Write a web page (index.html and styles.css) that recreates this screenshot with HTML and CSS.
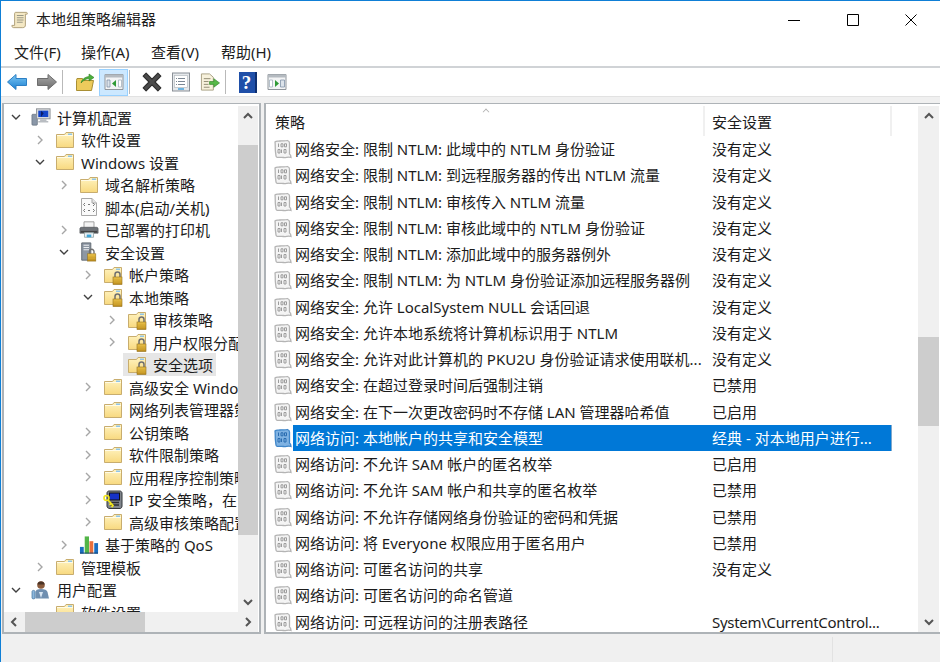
FILE: index.html
```html
<!DOCTYPE html>
<html lang="zh-CN">
<head>
    <meta charset="utf-8">
    <title>本地组策略编辑器</title>
    <link rel="stylesheet" href="styles.css">
</head>
<body>
<svg class="sprite" xmlns="http://www.w3.org/2000/svg">
    <defs>
        <linearGradient id="folder-fill" x1="0" y1="0" x2="0" y2="1"><stop offset="0" stop-color="#fff3c0"/><stop offset="1" stop-color="#f8d97f"/></linearGradient>
        <linearGradient id="gold" x1="0" y1="0" x2="0" y2="1"><stop offset="0" stop-color="#ecc44c"/><stop offset="1" stop-color="#b98a1c"/></linearGradient>
        <linearGradient id="back-fill" x1="0" y1="0" x2="0" y2="1"><stop offset="0" stop-color="#7cc8f5"/><stop offset="1" stop-color="#1b7fd0"/></linearGradient>
        <linearGradient id="gray-fill" x1="0" y1="0" x2="0" y2="1"><stop offset="0" stop-color="#a8a8a8"/><stop offset="1" stop-color="#6c6c6c"/></linearGradient>
        <symbol id="chev-right" viewBox="0 0 12 12"><path d="M4 2l4 4-4 4" fill="none" stroke="#a6a6a6" stroke-width="1.4"/></symbol>
        <symbol id="chev-down" viewBox="0 0 12 12"><path d="M2 4l4 4 4-4" fill="none" stroke="#404040" stroke-width="1.4"/></symbol>
        <symbol id="bar-up" viewBox="0 0 12 12"><path d="M2 8l4-4 4 4" fill="none" stroke="#555" stroke-width="2"/></symbol>
        <symbol id="bar-down" viewBox="0 0 12 12"><path d="M2 4l4 4 4-4" fill="none" stroke="#555" stroke-width="2"/></symbol>
        <symbol id="bar-left" viewBox="0 0 12 12"><path d="M8 2L4 6l4 4" fill="none" stroke="#555" stroke-width="2"/></symbol>
        <symbol id="bar-right" viewBox="0 0 12 12"><path d="M4 2l4 4-4 4" fill="none" stroke="#555" stroke-width="2"/></symbol>
        <symbol id="folder" viewBox="0 0 20 20">
            <path d="M1.500 4.500V17.500H18.500V2.500H11L9.500 4.500Z" fill="url(#folder-fill)" stroke="#c8ad6e"/>
            <path d="M2 5.500H18" stroke="#fffbe6"/>
            <path d="M13 3.500h4v1.500h-4z" fill="#8fc4e8"/>
        </symbol>
        <symbol id="folder-lock" viewBox="0 0 20 20">
            <path d="M1.500 4.500V17.500H18.500V2.500H11L9.500 4.500Z" fill="url(#folder-fill)" stroke="#c8ad6e"/>
            <path d="M13 3.500h4v1.500h-4z" fill="#8fc4e8"/>
            <path d="M12 12V9.500a2.500 2.500 0 0 1 5 0V12" fill="none" stroke="#6f6f6f" stroke-width="1.500"/>
            <rect x="10" y="12" width="9" height="7.500" fill="url(#gold)" stroke="#94701a" stroke-width=".6"/>
            <path d="M10.500 15h8M10.500 17h8" stroke="#d9ae35" stroke-width=".7"/>
        </symbol>
        <symbol id="policy" viewBox="0 0 18 20">
            <path d="M1 3C2.500 1.500 4 2.500 6 2C8 1.500 10 2.500 13.500 1.500C15 2 15.500 3 15.500 4V15C16.500 15.500 17 16.500 17 18.500C14 17.500 12 19 9.500 18.500C7 18 4 19 2.500 18C1.500 17 2 15 1.500 13C1 10 1.500 6 1 3Z" fill="var(--paper, #f4f4f4)" stroke="var(--edge, #b4b4b4)" stroke-width="1.300"/>
            <g fill="none" stroke="var(--mark, #9c9c9c)" stroke-width="1">
                <path d="M4.500 4.500v3.500M7 4.800h2v3h-2zM10.500 4.800h2v3h-2z"/>
                <path d="M4 10.500h2v3.500h-2zM7.500 10.500v3.500M10 10.500h2v3.500h-2z"/>
            </g>
        </symbol>
        <symbol id="scroll" viewBox="0 0 20 20">
            <path d="M5 1.500H17C18 1.500 18.500 2.500 18 3.500H16V15.500C16 17.500 15 18.500 13 18.500H3C1.500 18.500 1 17.500 1 16H4V3C4 2 4.500 1.500 5 1.500Z" fill="#f4e8c4" stroke="#a99972"/>
            <path d="M6.500 5H14M6.500 7.500H14M6.500 10H14M6.500 12.500H13" stroke="#8f8f80"/>
        </symbol>
        <symbol id="computer" viewBox="0 0 22 20">
            <rect x="1" y="7" width="6" height="12" rx="1" fill="#8a97a8" stroke="#5f6a78" stroke-width=".7"/>
            <rect x="6" y="1" width="15" height="11" fill="#d5d8dc" stroke="#8b8f95"/>
            <rect x="8" y="3" width="11" height="7" fill="#1444c8"/>
            <path d="M11 3l3 3-3 4z" fill="#0b1e66"/>
            <path d="M10 12.500h7v2h-7zM8 14.500h11v1.500H8z" fill="#b9bdc2"/>
        </symbol>
        <symbol id="script" viewBox="0 0 18 20">
            <path d="M1.500 1.500H12L16.500 6V18.500H1.500Z" fill="#fafafa" stroke="#a8a8a8"/>
            <path d="M12 1.500V6H16.500" fill="#e5e5e5" stroke="#a8a8a8"/>
            <path d="M5 6L3.500 7.500 5 9M8 7.500h2M13 6l1.500 1.500L13 9M5 12L3.500 13.500 5 15M8 13.500h2M13 12l1.500 1.500L13 15" fill="none" stroke="#777"/>
        </symbol>
        <symbol id="printer" viewBox="0 0 22 20">
            <path d="M5.500 1h11v7h-11z" fill="#f4f4f4" stroke="#999"/>
            <path d="M1 8.500C1 7.500 2 7 3 7H19C20 7 21 7.500 21 8.500V13.500H1Z" fill="#6f7378" stroke="#4e5156" stroke-width=".7"/>
            <path d="M2 11h18v2H2z" fill="#444"/>
            <path d="M6 13h10v5H6z" fill="#eef3f7" stroke="#9aa"/>
            <path d="M8.500 15h5v3h-5z" fill="#3fa6d8"/>
        </symbol>
        <symbol id="server-lock" viewBox="0 0 20 22">
            <path d="M2 1h10v19H2z" fill="#8d97a3" stroke="#5e6670"/>
            <path d="M4 3.500h6M4 6h6M4 8.500h6" stroke="#e9ecef" stroke-width="1.200"/>
            <path d="M10.500 13V10.500a2.500 2.500 0 0 1 5 0V13" fill="none" stroke="#6f6f6f" stroke-width="1.500"/>
            <rect x="8.500" y="13" width="9" height="8" fill="url(#gold)" stroke="#94701a" stroke-width=".6"/>
            <path d="M9 16h8M9 18h8" stroke="#d9ae35" stroke-width=".7"/>
        </symbol>
        <symbol id="ip-sec" viewBox="0 0 20 20">
            <path d="M4 3C4 1.800 5 1 6 1H17C18 1 19 2 19 3V16C19 17.500 18 18.500 17 18.500H7C5 18.500 4 17.500 4 16Z" fill="#80858c" stroke="#33363a"/>
            <rect x="6.500" y="3" width="10" height="7" fill="#1632c8" stroke="#111"/>
            <path d="M7 12.500h9M7 15h9" stroke="#2c2e32" stroke-width="1.300"/>
            <circle cx="3.500" cy="8" r="2.500" fill="none" stroke="#f2e61e" stroke-width="1.600"/>
            <path d="M5 10l5.500 6M8 13.500l-1.500 1.500M10 15.500L8.500 17" fill="none" stroke="#f2e61e" stroke-width="1.800"/>
        </symbol>
        <symbol id="qos" viewBox="0 0 21 20">
            <path d="M1 12h4v7H1z" fill="#1a6fc0"/>
            <path d="M6 1h4.500v18H6z" fill="#53b548"/>
            <path d="M11 6h4v13h-4z" fill="#e8703c"/>
            <path d="M16 8h4v11h-4z" fill="#1a6fc0"/>
            <path d="M1 18h19v1H1z" fill="#0e3e70"/>
        </symbol>
        <symbol id="user" viewBox="0 0 20 20">
            <circle cx="10" cy="5" r="3.800" fill="#8a5b3c"/>
            <path d="M10 1.500c2 0 3.500 1.200 3.500 3H6.500c0-1.800 1.500-3 3.500-3z" fill="#4a3326"/>
            <path d="M4.500 18.500V12c0-2 2-3 5.500-3s6 1 6.500 3l1.500 6.500z" fill="#6f8fb0"/>
            <path d="M1 11.500c0-1.500 3-1.500 3 0V18c0 1.200-3 1.200-3 0z" fill="#8db7dc" stroke="#40709c" stroke-width=".7"/>
            <path d="M8 12l2 6 2-6z" fill="#d8e6f2"/>
        </symbol>
        <symbol id="go-back" viewBox="0 0 20 18"><path d="M.5 9L9 1.500V5.500H19.500V12.500H9V16.500Z" fill="url(#back-fill)" stroke="#2c7fc4" stroke-linejoin="round"/></symbol>
        <symbol id="go-forward" viewBox="0 0 20 18"><path d="M19.500 9L11 1.500V5.500H.5V12.500H11V16.500Z" fill="url(#gray-fill)" stroke="#6d6d6d" stroke-linejoin="round"/></symbol>
        <symbol id="go-up" viewBox="0 0 20 20">
            <path d="M1.500 8.500V18.500H16.500L18.500 8.500H9L7.500 6.500H2Z" fill="#eccb5c" stroke="#a98f34"/>
            <path d="M6 11C7 7 10 5 14 4.500V2L19 5.500 14 9V6.500C11 7 8 8.500 6 11Z" fill="#4caf3c" stroke="#2f7f22" stroke-width=".6"/>
        </symbol>
        <symbol id="pane-left" viewBox="0 0 20 20">
            <path d="M1 2.500h18v15H1z" fill="#f3f4f5" stroke="#8f959b"/>
            <path d="M1 2.500h18v3H1z" fill="#b4bac0"/>
            <path d="M3 8h3v7H3z" fill="#dce3ea" stroke="#8093a8" stroke-width=".8"/>
            <path d="M14.500 8h3v7h-3z" fill="#fff" stroke="#a5b2bf" stroke-width=".8"/>
            <path d="M8 11.500l4-3.500v7z" fill="#2f9a35"/>
        </symbol>
        <symbol id="pane-right" viewBox="0 0 20 20">
            <path d="M1 2.500h18v15H1z" fill="#f3f4f5" stroke="#8f959b"/>
            <path d="M1 2.500h18v3H1z" fill="#b4bac0"/>
            <path d="M2.500 8h3v7h-3z" fill="#fff" stroke="#a5b2bf" stroke-width=".8"/>
            <path d="M13.500 8h4v7h-4z" fill="#dce3ea" stroke="#8093a8" stroke-width=".8"/>
            <path d="M12 11.500L8 8v7z" fill="#2f9a35"/>
        </symbol>
        <symbol id="delete" viewBox="1.500 1.500 17 17"><path d="M2.500 5L5 2.500 10 7.500 15 2.500 17.500 5 12.500 10 17.500 15 15 17.500 10 12.500 5 17.500 2.500 15 7.500 10Z" fill="#4b4b4b" stroke="#2e2e2e" stroke-linejoin="round"/></symbol>
        <symbol id="props" viewBox="0 0 20 20">
            <rect x="1.500" y="1" width="17" height="18" fill="#e5e8eb" stroke="#8a9097"/>
            <rect x="3.500" y="3.500" width="13" height="12" fill="#fff" stroke="#b5bbc1" stroke-width=".7"/>
            <path d="M7 6.500h7M7 9.500h7M7 12.500h7M5 6.500h1M5 9.500h1M5 12.500h1" stroke="#7b8794"/>
            <path d="M7 17h6" stroke="#46a5de" stroke-width="1.500"/>
        </symbol>
        <symbol id="export" viewBox="0 0 21 20">
            <path d="M1.500 1.500H10L14 5V18.500H1.500Z" fill="#f7f1dc" stroke="#a9a184"/>
            <path d="M4 6.500h7M4 9.500h5M4 12.500h5M4 15.500h6" stroke="#8f8a72"/>
            <path d="M10 9.500h4.500V6.500L20.500 11 14.500 15.500V12.500H10Z" fill="#57b947" stroke="#38872c" stroke-width=".7"/>
        </symbol>
        <symbol id="win-min" viewBox="0 0 12 12"><path d="M0 6.500h12" stroke="#000"/></symbol>
        <symbol id="win-max" viewBox="0 0 12 12"><path d="M.5.500h11v11H.5z" fill="none" stroke="#000"/></symbol>
        <symbol id="win-close" viewBox="0 0 12 12"><path d="M.5.500l11 11M11.500.500l-11 11" stroke="#000"/></symbol>
    </defs>
</svg>

<div class="window">
    <div class="titlebar">
        <svg class="title-icon"><use href="#scroll"/></svg>
        <div class="title">本地组策略编辑器</div>
        <div class="win-buttons">
            <svg class="win-btn"><use href="#win-min"/></svg>
            <svg class="win-btn"><use href="#win-max"/></svg>
            <svg class="win-btn"><use href="#win-close"/></svg>
        </div>
    </div>

    <div class="menubar">
        <span class="menu-item first">文件(F)</span>
        <span class="menu-item">操作(A)</span>
        <span class="menu-item">查看(V)</span>
        <span class="menu-item">帮助(H)</span>
    </div>

    <div class="toolbar">
        <div class="tool back"><svg class="tool-wide"><use href="#go-back"/></svg></div>
        <div class="tool"><svg class="tool-wide"><use href="#go-forward"/></svg></div>
        <div class="tool-sep"></div>
        <div class="tool"><svg class="tool-icon"><use href="#go-up"/></svg></div>
        <div class="tool active"><svg class="tool-icon"><use href="#pane-left"/></svg></div>
        <div class="tool-sep"></div>
        <div class="tool"><svg class="tool-icon"><use href="#delete"/></svg></div>
        <div class="tool"><svg class="tool-icon"><use href="#props"/></svg></div>
        <div class="tool"><svg class="tool-icon"><use href="#export"/></svg></div>
        <div class="tool-sep"></div>
        <div class="tool"><div class="help-icon">?</div></div>
        <div class="tool"><svg class="tool-icon"><use href="#pane-right"/></svg></div>
    </div>

    <div class="panes">
        <div class="pane tree-pane">
            <div class="tree-main">
                <div class="tree">
                    <div class="row l0"><svg class="arrow"><use href="#chev-down"/></svg><div class="node"><svg class="ico"><use href="#computer"/></svg><span>计算机配置</span></div></div>
                    <div class="row l1"><svg class="arrow"><use href="#chev-right"/></svg><div class="node"><svg class="ico"><use href="#folder"/></svg><span>软件设置</span></div></div>
                    <div class="row l1"><svg class="arrow"><use href="#chev-down"/></svg><div class="node"><svg class="ico"><use href="#folder"/></svg><span>Windows 设置</span></div></div>
                    <div class="row l2"><svg class="arrow"><use href="#chev-right"/></svg><div class="node"><svg class="ico"><use href="#folder"/></svg><span>域名解析策略</span></div></div>
                    <div class="row l2"><span class="arrow"></span><div class="node"><svg class="ico"><use href="#script"/></svg><span>脚本(启动/关机)</span></div></div>
                    <div class="row l2"><svg class="arrow"><use href="#chev-right"/></svg><div class="node"><svg class="ico"><use href="#printer"/></svg><span>已部署的打印机</span></div></div>
                    <div class="row l2"><svg class="arrow"><use href="#chev-down"/></svg><div class="node"><svg class="ico"><use href="#server-lock"/></svg><span>安全设置</span></div></div>
                    <div class="row l3"><svg class="arrow"><use href="#chev-right"/></svg><div class="node"><svg class="ico"><use href="#folder-lock"/></svg><span>帐户策略</span></div></div>
                    <div class="row l3"><svg class="arrow"><use href="#chev-down"/></svg><div class="node"><svg class="ico"><use href="#folder-lock"/></svg><span>本地策略</span></div></div>
                    <div class="row l4"><svg class="arrow"><use href="#chev-right"/></svg><div class="node"><svg class="ico"><use href="#folder-lock"/></svg><span>审核策略</span></div></div>
                    <div class="row l4"><svg class="arrow"><use href="#chev-right"/></svg><div class="node"><svg class="ico"><use href="#folder-lock"/></svg><span>用户权限分配</span></div></div>
                    <div class="row l4"><span class="arrow"></span><div class="node current"><svg class="ico"><use href="#folder-lock"/></svg><span>安全选项</span></div></div>
                    <div class="row l3"><svg class="arrow"><use href="#chev-right"/></svg><div class="node"><svg class="ico"><use href="#folder"/></svg><span>高级安全 Windows 防火墙</span></div></div>
                    <div class="row l3"><span class="arrow"></span><div class="node"><svg class="ico"><use href="#folder"/></svg><span>网络列表管理器策略</span></div></div>
                    <div class="row l3"><svg class="arrow"><use href="#chev-right"/></svg><div class="node"><svg class="ico"><use href="#folder"/></svg><span>公钥策略</span></div></div>
                    <div class="row l3"><svg class="arrow"><use href="#chev-right"/></svg><div class="node"><svg class="ico"><use href="#folder"/></svg><span>软件限制策略</span></div></div>
                    <div class="row l3"><svg class="arrow"><use href="#chev-right"/></svg><div class="node"><svg class="ico"><use href="#folder"/></svg><span>应用程序控制策略</span></div></div>
                    <div class="row l3"><svg class="arrow"><use href="#chev-right"/></svg><div class="node"><svg class="ico"><use href="#ip-sec"/></svg><span>IP 安全策略，在 本地计算机</span></div></div>
                    <div class="row l3"><svg class="arrow"><use href="#chev-right"/></svg><div class="node"><svg class="ico"><use href="#folder"/></svg><span>高级审核策略配置</span></div></div>
                    <div class="row l2"><svg class="arrow"><use href="#chev-right"/></svg><div class="node"><svg class="ico"><use href="#qos"/></svg><span>基于策略的 QoS</span></div></div>
                    <div class="row l1"><svg class="arrow"><use href="#chev-right"/></svg><div class="node"><svg class="ico"><use href="#folder"/></svg><span>管理模板</span></div></div>
                    <div class="row l0"><svg class="arrow"><use href="#chev-down"/></svg><div class="node"><svg class="ico"><use href="#user"/></svg><span>用户配置</span></div></div>
                    <div class="row l1"><span class="arrow"></span><div class="node"><svg class="ico"><use href="#folder"/></svg><span>软件设置</span></div></div>
                </div>
                <div class="vscroll">
                    <svg class="bar-btn"><use href="#bar-up"/></svg>
                    <div class="track tree-track"><div class="thumb"></div></div>
                    <svg class="bar-btn"><use href="#bar-down"/></svg>
                </div>
            </div>
            <div class="hscroll">
                <svg class="bar-btn"><use href="#bar-left"/></svg>
                <div class="htrack"><div class="hthumb"></div></div>
                <svg class="bar-btn"><use href="#bar-right"/></svg>
            </div>
        </div>

        <div class="pane list-pane">
            <div class="list">
                <div class="list-head">
                    <div class="col-name head-cell">策略<span class="sort-mark"></span></div>
                    <div class="col-value head-cell">安全设置</div>
                </div>
                <div class="item"><svg class="doc"><use href="#policy"/></svg><div class="col-name">网络安全: 限制 NTLM: 此域中的 NTLM 身份验证</div><div class="col-value">没有定义</div></div>
                <div class="item"><svg class="doc"><use href="#policy"/></svg><div class="col-name">网络安全: 限制 NTLM: 到远程服务器的传出 NTLM 流量</div><div class="col-value">没有定义</div></div>
                <div class="item"><svg class="doc"><use href="#policy"/></svg><div class="col-name">网络安全: 限制 NTLM: 审核传入 NTLM 流量</div><div class="col-value">没有定义</div></div>
                <div class="item"><svg class="doc"><use href="#policy"/></svg><div class="col-name">网络安全: 限制 NTLM: 审核此域中的 NTLM 身份验证</div><div class="col-value">没有定义</div></div>
                <div class="item"><svg class="doc"><use href="#policy"/></svg><div class="col-name">网络安全: 限制 NTLM: 添加此域中的服务器例外</div><div class="col-value">没有定义</div></div>
                <div class="item"><svg class="doc"><use href="#policy"/></svg><div class="col-name">网络安全: 限制 NTLM: 为 NTLM 身份验证添加远程服务器例</div><div class="col-value">没有定义</div></div>
                <div class="item"><svg class="doc"><use href="#policy"/></svg><div class="col-name">网络安全: 允许 LocalSystem NULL 会话回退</div><div class="col-value">没有定义</div></div>
                <div class="item"><svg class="doc"><use href="#policy"/></svg><div class="col-name">网络安全: 允许本地系统将计算机标识用于 NTLM</div><div class="col-value">没有定义</div></div>
                <div class="item"><svg class="doc"><use href="#policy"/></svg><div class="col-name">网络安全: 允许对此计算机的 PKU2U 身份验证请求使用联机...</div><div class="col-value">没有定义</div></div>
                <div class="item"><svg class="doc"><use href="#policy"/></svg><div class="col-name">网络安全: 在超过登录时间后强制注销</div><div class="col-value">已禁用</div></div>
                <div class="item"><svg class="doc"><use href="#policy"/></svg><div class="col-name">网络安全: 在下一次更改密码时不存储 LAN 管理器哈希值</div><div class="col-value">已启用</div></div>
                <div class="item selected"><svg class="doc"><use href="#policy"/></svg><div class="col-name">网络访问: 本地帐户的共享和安全模型</div><div class="col-value">经典 - 对本地用户进行...</div></div>
                <div class="item"><svg class="doc"><use href="#policy"/></svg><div class="col-name">网络访问: 不允许 SAM 帐户的匿名枚举</div><div class="col-value">已启用</div></div>
                <div class="item"><svg class="doc"><use href="#policy"/></svg><div class="col-name">网络访问: 不允许 SAM 帐户和共享的匿名枚举</div><div class="col-value">已禁用</div></div>
                <div class="item"><svg class="doc"><use href="#policy"/></svg><div class="col-name">网络访问: 不允许存储网络身份验证的密码和凭据</div><div class="col-value">已禁用</div></div>
                <div class="item"><svg class="doc"><use href="#policy"/></svg><div class="col-name">网络访问: 将 Everyone 权限应用于匿名用户</div><div class="col-value">已禁用</div></div>
                <div class="item"><svg class="doc"><use href="#policy"/></svg><div class="col-name">网络访问: 可匿名访问的共享</div><div class="col-value">没有定义</div></div>
                <div class="item"><svg class="doc"><use href="#policy"/></svg><div class="col-name">网络访问: 可匿名访问的命名管道</div><div class="col-value"></div></div>
                <div class="item"><svg class="doc"><use href="#policy"/></svg><div class="col-name">网络访问: 可远程访问的注册表路径</div><div class="col-value tight">System\CurrentControl...</div></div>
            </div>
            <div class="vscroll list-scroll">
                <svg class="bar-btn"><use href="#bar-up"/></svg>
                <div class="track list-track"><div class="thumb"></div></div>
                <svg class="bar-btn"><use href="#bar-down"/></svg>
            </div>
        </div>
    </div>

    <div class="statusbar">
        <div class="status-cell"></div>
        <div class="status-cell last"></div>
    </div>
</div>
</body>
</html>
```

FILE: styles.css
```css
html, body {
    margin: 0;
    padding: 0;
    background: #fff;
}
body {
    font-family: "Noto Sans", "Noto Sans CJK SC", sans-serif;
    font-size: 15px;
    color: #1c1c1c;
    overflow: hidden;
}
.sprite {
    display: block;
    width: 0;
    height: 0;
}
.window {
    box-sizing: border-box;
    width: 940px;
    height: 662px;
    border-top: 1px solid #0f7fd6;
    border-left: 1px solid #0f7fd6;
    display: flex;
    flex-direction: column;
    overflow: hidden;
}

/* title + menu */
.titlebar {
    height: 38px;
    display: flex;
    align-items: center;
    flex: none;
}
.title-icon {
    width: 18px;
    height: 18px;
    margin-left: 10px;
    margin-top: -1px;
}
.title {
    margin-left: 7px;
    line-height: 36px;
    height: 38px;
}
.win-buttons {
    margin-left: auto;
    display: flex;
    gap: 46.5px;
    margin-right: 23px;
}
.win-btn {
    width: 12px;
    height: 12px;
}
.menubar {
    height: 27px;
    flex: none;
    display: flex;
    padding-left: 13px;
    line-height: 27px;
}
.menu-item {
    width: 70px;
}
.menu-item.first {
    width: 67px;
}

/* toolbar */
.toolbar {
    height: 28px;
    flex: none;
    border-top: 2px solid #d0d3d6;
    border-bottom: 1px solid #e2e2e2;
    display: flex;
    align-items: center;
    padding-left: 2px;
}
.tool {
    box-sizing: border-box;
    width: 29px;
    height: 27px;
    display: flex;
    align-items: center;
    justify-content: center;
}
.tool.back {
    padding-right: 2px;
}
.tool.active {
    background: #cce8ff;
    border: 1px solid #99d1ff;
}
.tool-icon {
    width: 20px;
    height: 20px;
}
.tool-wide {
    width: 20px;
    height: 18px;
}
.tool-sep {
    width: 1px;
    height: 24px;
    background: #b9b9b9;
    margin: 0 7px 0 1px;
}
.help-icon {
    width: 16px;
    height: 21px;
    background: #1f4fa8;
    border-right: 2px solid #0e2f70;
    color: #fff;
    font-family: "Liberation Serif", serif;
    font-size: 19px;
    font-weight: bold;
    line-height: 21px;
    text-align: center;
}

/* panes */
.panes {
    flex: 1;
    min-height: 0;
    background: #f0f0f0;
    display: flex;
    gap: 3px;
    padding: 6px 0 0 1px;
}
.pane {
    box-sizing: border-box;
    background: #fff;
    border: 2px solid #aeb3b7;
    height: 531px;
    display: flex;
    overflow: hidden;
}
.tree-pane {
    width: 259px;
    flex: none;
    flex-direction: column;
    border-top-width: 1px;
    padding-right: 1px;
}
.tree-main {
    flex: 1;
    min-height: 0;
    display: flex;
    padding-top: 2px;
}
.tree {
    flex: 1;
    min-width: 0;
    overflow: hidden;
}
.row {
    height: 22.5px;
    display: flex;
    align-items: center;
    white-space: nowrap;
}
.l0 { padding-left: 6px; }
.l1 { padding-left: 30px; }
.l2 { padding-left: 54px; }
.l3 { padding-left: 78px; }
.l4 { padding-left: 102px; }
.arrow {
    width: 12px;
    height: 12px;
    flex: none;
}
.node {
    display: flex;
    align-items: center;
    height: 23px;
    padding: 0 3px 0 4px;
    margin-left: 5px;
}
.node.current {
    background: #e6e6e6;
}
.ico {
    width: 20px;
    height: 20px;
    flex: none;
    margin-right: 6px;
}

/* scrollbars */
.vscroll {
    width: 20px;
    flex: none;
    background: #f0f0f0;
    display: flex;
    flex-direction: column;
    align-items: center;
}
.bar-btn {
    width: 12px;
    height: 12px;
    flex: none;
    margin: 4px;
}
.track {
    flex: 1;
    width: 100%;
    display: flex;
}
.thumb {
    width: 100%;
    background: #cdcdcd;
}
.tree-track {
    padding: 19px 0 57px;
}
.list-track {
    padding: 211px 0 186px;
}
.list-scroll {
    width: 21px;
    margin-right: 1px;
}
.hscroll {
    height: 20px;
    flex: none;
    background: #f0f0f0;
    display: flex;
    align-items: center;
}
.htrack {
    flex: 1;
    height: 100%;
}
.hthumb {
    width: 120px;
    height: 100%;
    background: #cdcdcd;
    margin-left: 1px;
}

/* list */
.list-pane {
    flex: 1;
    min-width: 0;
    border-right: 0;
    border-top-width: 1px;
    padding-top: 2px;
}
.list {
    flex: 1;
    min-width: 0;
    overflow: hidden;
}
.list-head {
    height: 30px;
    display: flex;
    line-height: 32px;
}
.head-cell {
    border-right: 2px solid #f0f0f0;
    box-sizing: border-box;
}
.list-head .col-name {
    width: 439px;
    padding-left: 9px;
    position: relative;
}
.list-head .col-value {
    width: 187px;
    padding-left: 7px;
}
.sort-mark {
    position: absolute;
    top: 3px;
    left: 217px;
    width: 5px;
    height: 5px;
    border-top: 1px solid #b0b0b0;
    border-left: 1px solid #b0b0b0;
    transform: rotate(45deg) scale(.8);
}
.item {
    height: 26.25px;
    display: flex;
    align-items: center;
    white-space: nowrap;
    width: 626px;
}
.doc {
    width: 18px;
    height: 20px;
    flex: none;
    margin: 0 1px 0 8px;
}
.item .col-name {
    box-sizing: border-box;
    width: 411px;
    height: 100%;
    line-height: 26px;
    padding-left: 2px;
    flex: none;
}
.item .col-value {
    flex: 1;
    height: 100%;
    line-height: 26px;
    padding-left: 8px;
}
.item .col-value.tight {
    letter-spacing: -.3px;
}
.item.selected .col-name,
.item.selected .col-value {
    background: #0078d7;
    color: #fff;
}
.item.selected .col-value {
    box-shadow: inset -1px 0 #7fa8cc;
}
.item.selected .doc {
    --paper: #7fb2e2;
    --edge: #3f86c9;
    --mark: #2a6cb0;
}

/* status */
.statusbar {
    flex: none;
    height: 27px;
    background: #f0f0f0;
    display: flex;
    padding-top: 2px;
    box-sizing: border-box;
}
.status-cell {
    width: 831px;
    border-right: 1px solid #e2e2e2;
}
.status-cell.last {
    width: auto;
    flex: 1;
    border: 0;
}
```
